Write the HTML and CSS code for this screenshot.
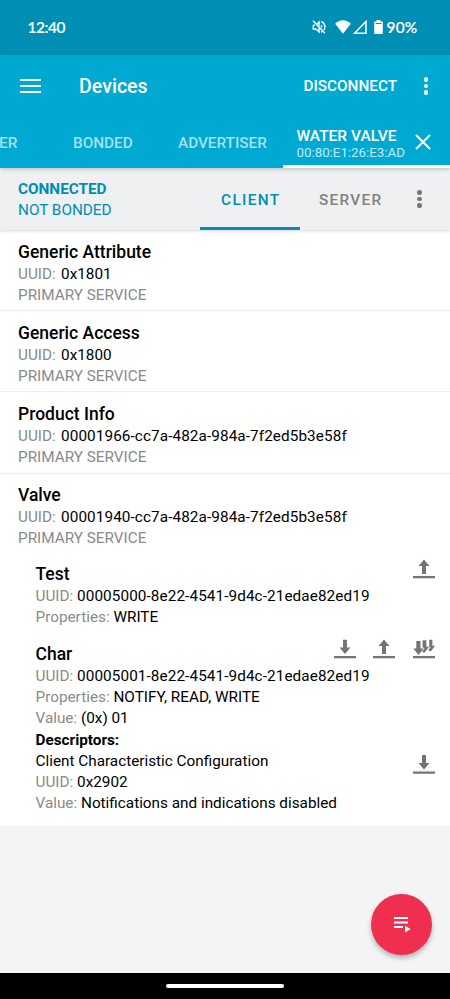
FILE: index.html
```html
<!DOCTYPE html>
<html lang="en">
<head>
<meta charset="utf-8">
<title>Devices</title>
<link rel="stylesheet" href="styles.css">
</head>
<body>
<svg class="defs" width="0" height="0">
  <symbol id="read" viewBox="0 0 22 20"><path d="M9 0h4v8h3.500L11 14.500 5.500 8H9zM0 16.500h22v2.300H0z"/></symbol>
  <symbol id="write" viewBox="0 0 22 20"><path d="M11 0l5.500 6.500H13v8H9v-8H5.500zM0 16.500h22v2.300H0z"/></symbol>
  <symbol id="notify" viewBox="0 0 22 20"><path d="M3.300 1.500h4.200V9h3.200L5.500 15.500.3 9h3z"/><path d="M9.600.8h3.800v6.500h2.800L11.500 13.300 9 12.500 11.500 8.500 9.600 8z"/><path d="M16.200 0h3.200v6.300H22L17.800 12l-2.600-1.200L17.500 7.500h-1.300z"/><path d="M0 16.500h22v2.300H0z"/></symbol>
</svg>
<div class="screen">
  <div class="status">
    <span class="clock">12:40</span>
    <svg class="mute" viewBox="0 0 14 14"><path d="M1 .8l12 12.400M1.300 5v4h2.500l3.300 3V6.500M5.200 3.700L7.100 2v3.500M8.900 5.200q1 .8.8 2.300M9.200 1.500c3.700 1.200 4.700 5.500 2.700 8.500M9 12.200l1.300-.6M3 5.200H1.300"/></svg>
    <svg class="wifi" viewBox="0 0 16 14"><path d="M8 13.800L.2 3.800Q3.500.3 8 .3t7.800 3.500z"/></svg>
    <svg class="signal" viewBox="0 0 14 14"><path d="M13 1.500v11.700H1.500z"/></svg>
    <svg class="battery" viewBox="0 0 9 14"><path d="M2.500 0h4v1.500H8q.8 0 .8.800v10.900q0 .8-.8.800H1q-.8 0-.8-.8V2.300q0-.8.800-.8h1.500z"/><path class="gap" d="M1.500 3.500h6"/></svg>
    <span class="percent">90%</span>
  </div>
  <header class="appbar">
    <div class="toolbar">
      <div class="burger"><i></i><i></i><i></i></div>
      <h1>Devices</h1>
      <span class="disconnect">DISCONNECT</span>
      <div class="dots"><i></i><i></i><i></i></div>
    </div>
    <nav class="tabs">
      <span class="tab scanner">ER</span>
      <span class="tab bonded">BONDED</span>
      <span class="tab advertiser">ADVERTISER</span>
      <div class="device">
        <div><div class="name">WATER VALVE</div><div class="mac">00:80:E1:26:E3:AD</div></div>
        <svg class="close" viewBox="0 0 16 16"><path d="M1 1l14 14M15 1L1 15"/></svg>
      </div>
    </nav>
  </header>
  <div class="subbar">
    <div class="state"><b>CONNECTED</b><span>NOT BONDED</span></div>
    <span class="mode active">CLIENT</span>
    <span class="mode">SERVER</span>
    <div class="dots dark"><i></i><i></i><i></i></div>
  </div>
  <main>
    <section class="service"><h2>Generic Attribute</h2><p><em>UUID:</em> 0x1801</p><p><em class="kind">PRIMARY SERVICE</em></p></section>
    <section class="service"><h2>Generic Access</h2><p><em>UUID:</em> 0x1800</p><p><em class="kind">PRIMARY SERVICE</em></p></section>
    <section class="service"><h2>Product Info</h2><p><em>UUID:</em> <span class="uuid">00001966-cc7a-482a-984a-7f2ed5b3e58f</span></p><p><em class="kind">PRIMARY SERVICE</em></p></section>
    <section class="service last"><h2>Valve</h2><p><em>UUID:</em> <span class="uuid">00001940-cc7a-482a-984a-7f2ed5b3e58f</span></p><p><em class="kind">PRIMARY SERVICE</em></p></section>
    <section class="char">
      <div class="head"><h2>Test</h2><svg><use href="#write"/></svg></div>
      <p><em>UUID:</em> <span class="uuid">00005000-8e22-4541-9d4c-21edae82ed19</span></p>
      <p><em>Properties:</em> WRITE</p>
    </section>
    <section class="char">
      <div class="head"><h2>Char</h2><svg><use href="#read"/></svg><svg><use href="#write"/></svg><svg><use href="#notify"/></svg></div>
      <p><em>UUID:</em> <span class="uuid">00005001-8e22-4541-9d4c-21edae82ed19</span></p>
      <p><em>Properties:</em> NOTIFY, READ, WRITE</p>
      <p><em>Value:</em> (0x) 01</p>
      <p><b>Descriptors:</b></p>
      <div class="descriptor"><p>Client Characteristic Configuration</p><svg><use href="#read"/></svg></div>
      <p><em>UUID:</em> 0x2902</p>
      <p><em>Value:</em> Notifications and indications disabled</p>
    </section>
  </main>
  <div class="rest">
    <div class="fab"><svg viewBox="0 0 17 16"><path d="M0 0h14v2H0zM0 4.500h14v2H0zM0 9h9v2H0zM11 8.700l5.700 3.400L11 15.500z"/></svg></div>
  </div>
  <div class="navbar"><i></i></div>
</div>
</body>
</html>
```
FILE: styles.css
```css
* { box-sizing: border-box; }
body { margin: 0; font-family: Roboto, "Liberation Sans", sans-serif; color: #000; }
h1, h2, p { margin: 0; font-weight: 400; }
svg { display: block; flex: none; }
.defs { position: absolute; }
.screen { width: 450px; height: 999px; display: flex; flex-direction: column; overflow: hidden; background: #f4f4f4; }
.status { height: 55px; flex: none; background: #008fb4; color: #fff; display: flex; align-items: center; padding: 0 31.5px 0 27.5px; }
.clock, .percent { font: 500 15.4px/20px Lato, sans-serif; -webkit-text-stroke: .2px #fff; margin-top: -1px; }
.clock { margin-right: auto; letter-spacing: -.4px; }
.mute { width: 14px; height: 14px; fill: none; stroke: #fff; stroke-width: 1.4; margin-right: 9px; }
.wifi { width: 16px; height: 14px; fill: #fff; margin-right: 2px; }
.signal { width: 14px; height: 14px; fill: none; stroke: #fff; stroke-width: 1.5; margin-right: 7px; }
.battery { width: 9px; height: 14px; fill: #fff; margin-right: 4px; }
.mute, .wifi, .signal, .battery { margin-top: -1px; }
.gap { stroke: #008fb4; stroke-width: 1; }
.percent { width: 32px; letter-spacing: .2px; }
.appbar { height: 113px; flex: none; background: #00a9d1; color: #fff; position: relative; z-index: 2; box-shadow: 0 1px 4px rgba(0,0,0,.22); }
.toolbar { height: 62px; display: flex; align-items: center; padding: 0 21.5px 0 20px; }
.burger { width: 21px; height: 14px; display: flex; flex-direction: column; justify-content: space-between; margin-right: 38px; }
.burger i { height: 2px; background: #fff; }
h1 { font-size: 19.6px; font-weight: 500; line-height: 24px; margin-right: auto; padding-top: 2px; }
.disconnect { font-size: 15.3px; font-weight: 500; margin-right: 26.5px; }
.dots { width: 5px; height: 18px; display: flex; flex-direction: column; justify-content: space-between; }
.dots i { width: 4.6px; height: 4.6px; border-radius: 50%; background: #fff; }
.dots.dark i { background: #757575; }
.tabs { height: 51px; display: flex; }
.tab { line-height: 52px; font-size: 15.3px; font-weight: 500; color: #a6e0ef; white-space: nowrap; }
.scanner { width: 73px; text-indent: -1px; }
.bonded { width: 105px; }
.advertiser { width: 105px; }
.device { width: 167px; border-bottom: 3px solid #fff; padding: 10px 19px 0 13.5px; display: flex; justify-content: space-between; }
.name { font-size: 15.5px; line-height: 18px; font-weight: 500; }
.mac { font-size: 13.3px; line-height: 15px; color: #c0e9f4; }
.close { width: 16px; height: 16px; margin-top: 7px; fill: none; stroke: #fff; stroke-width: 2; }
.subbar { height: 62px; flex: none; background: #eff0f2; display: flex; align-items: center; position: relative; z-index: 1; padding-left: 18px; box-shadow: 0 1px 3px rgba(0,0,0,.16); }
.state { width: 182px; padding-top: 2px; color: #008db1; font-size: 15.3px; line-height: 21px; display: flex; flex-direction: column; }
.state b { font-weight: 700; }
.mode { width: 100px; height: 62px; line-height: 64px; text-align: center; font-size: 15.3px; font-weight: 500; letter-spacing: 1.35px; text-indent: 1.5px; color: #808080; }
.mode.active { color: #008db1; border-bottom: 3px solid #008db1; }
.subbar .dots { margin-left: 17px; }
main { height: 596px; flex: none; background: #fff; }
p, .service p { font-size: 15.3px; line-height: 21.2px; height: 21.2px; white-space: pre; }
em { font-style: normal; color: #8a8a8a; }
h2 { font-size: 17.5px; line-height: 23px; font-weight: 500; }
.uuid { letter-spacing: .09px; }
.service { height: 81.2px; padding: 10.5px 18px 0; border-bottom: 1.5px solid #eee; }
.service p em:not(.kind) { margin-right: 1.5px; }
.service.last { height: 89.4px; border: 0; }
.char { padding-left: 35.5px; height: 80px; }
.head { display: flex; align-items: center; height: 23px; padding-right: 15.5px; }
.head h2 { margin-right: auto; }
.head svg, .descriptor svg { width: 22px; height: 20px; margin-left: 17.5px; fill: #757575; }
.head svg { transform: translateY(-4.5px); }
.descriptor { display: flex; justify-content: space-between; height: 21.2px; padding-right: 15.5px; }
.descriptor svg { margin-top: 4.5px; }
b { font-weight: 700; }
.rest { flex: 1; padding: 68px 18px 0 0; display: flex; justify-content: flex-end; }
.fab { width: 61px; height: 61px; border-radius: 50%; background: #ee2f4f; box-shadow: 0 3px 5px rgba(0,0,0,.28); display: flex; align-items: center; justify-content: center; }
.fab svg { width: 17px; height: 16px; fill: #fff; margin-left: 1px; }
.navbar { height: 26.500px; flex: none; background: #000; display: flex; justify-content: center; padding-top: 11px; }
.navbar i { width: 118px; height: 4px; border-radius: 2px; background: #fff; }
```
